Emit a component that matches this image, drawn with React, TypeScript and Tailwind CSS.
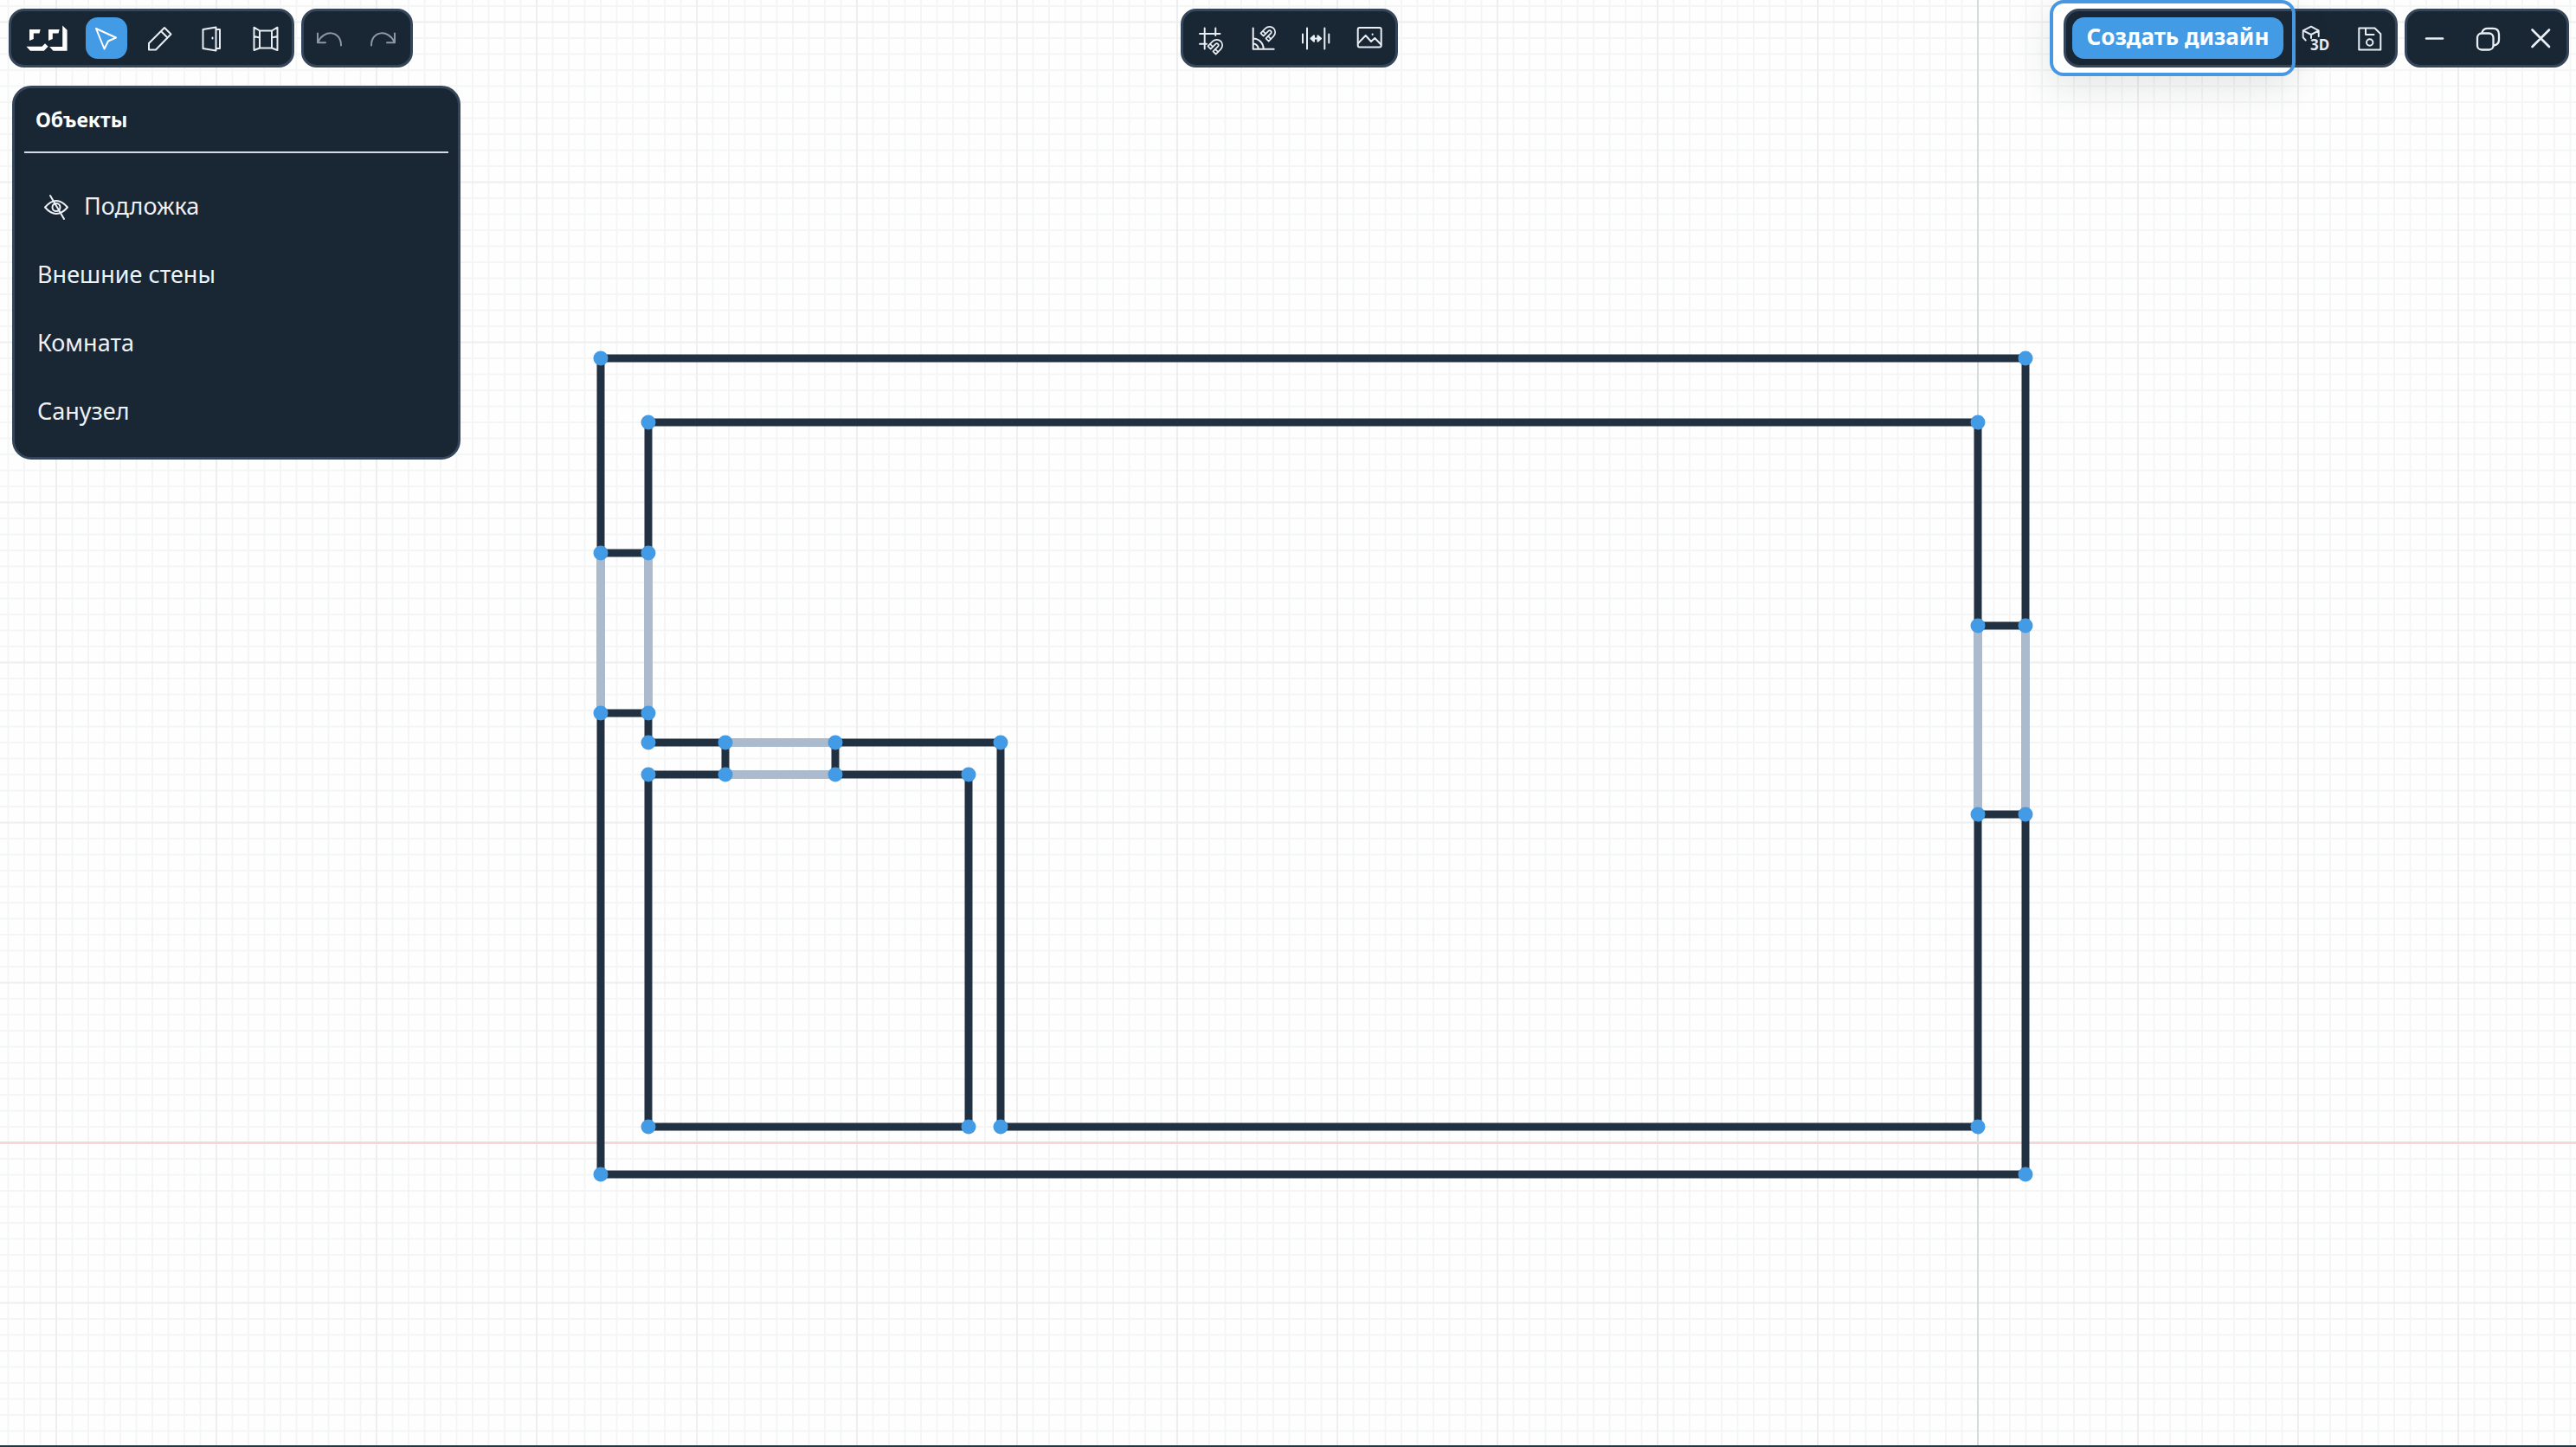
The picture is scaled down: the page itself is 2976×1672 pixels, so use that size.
import type { ReactNode } from "react";

const UNIT = 18.5;
const ORIGIN = { x: 2285, y: 1320.5 };

type Segment = [number, number, number, number];

const walls: Segment[] = [
  [694, 414, 2340, 414],
  [2340, 414, 2340, 723],
  [2340, 941, 2340, 1357],
  [2340, 1357, 694, 1357],
  [694, 1357, 694, 824],
  [694, 639, 694, 414],
  [749, 488, 2285, 488],
  [2285, 488, 2285, 723],
  [2285, 941, 2285, 1302],
  [2285, 1302, 1156, 1302],
  [1156, 1302, 1156, 858],
  [1156, 858, 965, 858],
  [838, 858, 749, 858],
  [749, 858, 749, 824],
  [749, 639, 749, 488],
  [694, 639, 749, 639],
  [694, 824, 749, 824],
  [2285, 723, 2340, 723],
  [2285, 941, 2340, 941],
  [838, 858, 838, 895],
  [965, 858, 965, 895],
  [749, 895, 838, 895],
  [965, 895, 1119, 895],
  [1119, 895, 1119, 1302],
  [1119, 1302, 749, 1302],
  [749, 1302, 749, 895],
];

const openings: Segment[] = [
  [694, 639, 694, 824],
  [749, 639, 749, 824],
  [2285, 723, 2285, 941],
  [2340, 723, 2340, 941],
  [838, 858, 965, 858],
  [838, 895, 965, 895],
];

const nodes = Array.from(
  new Set([...walls, ...openings].flatMap(([a, b, c, d]) => [`${a},${b}`, `${c},${d}`])),
).map((key) => key.split(",").map(Number));

function Lines({ segments }: { segments: Segment[] }) {
  return (
    <>
      {segments.map(([x1, y1, x2, y2], i) => (
        <line key={i} x1={x1} y1={y1} x2={x2} y2={y2} />
      ))}
    </>
  );
}

function FloorPlan() {
  const columns = Array.from({ length: 162 }, (_, i) => i - 123).filter((n) => n !== 0);
  const rows = Array.from({ length: 90 }, (_, i) => i - 71).filter((n) => n !== 0);
  const columnLines = (list: number[]) =>
    list.map((n) => <line key={`c${n}`} x1={ORIGIN.x + n * UNIT} x2={ORIGIN.x + n * UNIT} y1="0" y2="100%" />);
  const rowLines = (list: number[]) =>
    list.map((n) => <line key={`r${n}`} y1={ORIGIN.y + n * UNIT} y2={ORIGIN.y + n * UNIT} x1="0" x2="100%" />);
  const isMajor = (n: number) => n % 10 === 0;
  const isMinor = (n: number) => n % 10 !== 0;

  return (
    <svg className="absolute inset-0 h-full w-full" role="img" aria-label="План помещения">
      <g stroke="#f4f5f5" strokeWidth="2">
        {columnLines(columns.filter(isMinor))}
        {rowLines(rows.filter(isMinor))}
      </g>
      <g stroke="#edeeee" strokeWidth="2">
        {columnLines(columns.filter(isMajor))}
        {rowLines(rows.filter(isMajor))}
      </g>
      <line x1={ORIGIN.x} x2={ORIGIN.x} y1="0" y2="100%" stroke="#d6dcdc" strokeWidth="2" />
      <line y1={ORIGIN.y} y2={ORIGIN.y} x1="0" x2="100%" stroke="#f7d6d7" strokeWidth="3" />
      <g stroke="#223142" strokeWidth="9">
        <Lines segments={walls} />
      </g>
      <g stroke="#abbacd" strokeWidth="10">
        <Lines segments={openings} />
      </g>
      <g fill="#439be6">
        {nodes.map(([x, y]) => (
          <circle key={`${x}-${y}`} cx={x} cy={y} r="8.5" />
        ))}
      </g>
    </svg>
  );
}

function Icon({ children }: { children: ReactNode }) {
  return (
    <svg
      viewBox="0 0 48 48"
      className="size-12"
      fill="none"
      stroke="currentColor"
      strokeWidth="2"
      strokeLinejoin="round"
      strokeLinecap="round"
      aria-hidden="true"
    >
      {children}
    </svg>
  );
}

function Magnet({ x, y, angle }: { x: number; y: number; angle: number }) {
  return (
    <g transform={`translate(${x} ${y}) rotate(${angle})`} strokeWidth="1.7">
      <path d="M-6.5 7V-1A6.5 6.5 0 0 1 6.5-1V7H2V-1A2 2 0 0 0-2-1V7Z" />
      <path d="M-6.5 3.4H-2M2 3.4H6.5" />
    </g>
  );
}

function Tool({ label, active, muted, children }: { label: string; active?: boolean; muted?: boolean; children: ReactNode }) {
  const tone = active ? "bg-[#439be6] text-white" : muted ? "text-[#8d98a3]" : "text-[#e8eef4]";
  return (
    <button type="button" aria-label={label} className={`size-12 shrink-0 rounded-[14px] ${tone}`}>
      <Icon>{children}</Icon>
    </button>
  );
}

function Panel({ children }: { children: ReactNode }) {
  return (
    <div className="flex items-center gap-[13px] rounded-[18px] border-3 border-[#35465a] bg-[#192633] p-[7px]">
      {children}
    </div>
  );
}

function Logo() {
  return (
    <div className="flex w-[66px] justify-end pr-2">
      <svg viewBox="30 28 48 32" className="h-8 w-12" fill="#fff" role="img" aria-label="Логотип">
        <path d="M34 34H46.7L45.5 38.4H38.8V45L34 47Z" />
        <path d="M56 34H68.7L67.5 38.4H60.8V45L56 47Z" />
        <path d="M30.5 53.7H48.5L52 50.2L55.6 53.8L50.8 58.8H35Z" />
        <path d="M72.2 29.5L77.6 34.7V58.8H61.5L57.2 54H72.2Z" />
      </svg>
    </div>
  );
}

const objects = ["Внешние стены", "Комната", "Санузел"];

export default function App() {
  return (
    <main className="relative isolate min-h-screen overflow-hidden border-b-2 border-[#223644] bg-[#fefefe] font-['Noto_Sans','Open_Sans',sans-serif]">
      <FloorPlan />

      <header className="relative grid grid-cols-[1fr_auto_1fr] py-2.5 pl-2.5 pr-2">
        <div className="flex gap-2">
          <Panel>
            <Logo />
            <Tool label="Выбор" active>
              <path d="M12 13L35 23.5L26 27.5L21.5 36.5Z" />
            </Tool>
            <Tool label="Карандаш">
              <path d="M12 37.5V30L30 12L37.5 19.5L20 37.5ZM26 16L33.5 23.5" />
            </Tool>
            <Tool label="Дверь">
              <path d="M13.5 14L28.5 11.5V38.5L13.5 36ZM28.5 14H33V36H28.5" />
              <path d="M24.5 23.5V24.5" />
            </Tool>
            <Tool label="Окно">
              <path d="M18 15.5H32V35.5H18ZM11.5 11.7L18 15.5V35.5L11.5 38ZM38.5 11.7L32 15.5V35.5L38.5 38ZM11.5 22L18 23.5M38.5 22L32 23.5" />
            </Tool>
          </Panel>
          <Panel>
            <Tool label="Отменить" muted>
              <path d="M36 32.5C36 15 16 13.5 9 29M9 18.5V29.3H18" />
            </Tool>
            <Tool label="Повторить" muted>
              <path d="M10 32.5C10 15 30 13.5 37 29M37 18.5V29.3H28" />
            </Tool>
          </Panel>
        </div>

        <Panel>
          <Tool label="Привязка к сетке">
            <path d="M12 19H35.5M12 30.7H20M17.7 12.5V36.5M30.3 12.5V21" />
            <Magnet x={31} y={33} angle={45} />
          </Tool>
          <Tool label="Привязка к углу">
            <path d="M12.7 12.5V36.7H36.7M12.7 24.5A12 12 0 0 1 24.7 36.5M12.7 30.5A6 6 0 0 1 18.7 36.5" />
            <Magnet x={31} y={18} angle={45} />
          </Tool>
          <Tool label="Размеры">
            <path d="M9 19.5V29.5M14 12.5V36.5M34.3 12.5V36.5M39.3 19.5V29.5M20 24.5H29" />
            <path d="M18.5 24.5L22 21.3V27.7ZM30 24.5L26.5 21.3V27.7Z" fill="currentColor" />
          </Tool>
          <Tool label="Изображение">
            <rect x="11.7" y="12" width="27" height="22.5" rx="2" />
            <path d="M12 30L20.7 21L27 28L31.3 24L38.5 31.5M28.6 19.5V20" />
          </Tool>
        </Panel>

        <div className="flex justify-end gap-2">
          <div className="relative isolate">
            <div className="absolute -left-4 -top-2.5 -z-10 h-[88px] w-[284px] rounded-2xl bg-white" />
            <Panel>
              <button
                type="button"
                className="flex h-12 w-[244px] items-center justify-center rounded-[14px] bg-[#439be6] pb-1 text-[26px] font-bold text-white"
              >
                Создать дизайн
              </button>
              <Tool label="Трёхмерный вид">
                <path d="M19 10.7L27.7 15.3V22M19 10.7L9.7 15.3V23.3L12.7 26.5M9.7 15.3L19 20L27.7 15.3M19 20V24" />
                <text x="18" y="38" fill="currentColor" stroke="none" className="text-[17px] font-bold">
                  3D
                </text>
              </Tool>
              <Tool label="Сохранить">
                <path d="M13.3 12.5H31.5L38.3 19.3V37.5H13.3ZM21 12.5V20H30.5" />
                <circle cx="25.7" cy="29" r="3.7" />
              </Tool>
            </Panel>
            <div className="pointer-events-none absolute -left-4 -top-2.5 h-[88px] w-[284px] rounded-2xl border-4 border-[#4797e3] shadow-[0_12px_44px_rgba(40,50,60,0.12)]" />
          </div>
          <Panel>
            <Tool label="Свернуть">
              <path d="M15 24.5H34" strokeWidth="2.5" />
            </Tool>
            <Tool label="Развернуть">
              <rect x="13" y="18.5" width="18.5" height="19" rx="5" strokeWidth="2.3" />
              <path d="M18.5 17.5Q19.5 12.8 25 12.8H31Q38 12.8 38 19.8V26Q38 31.5 32 32.5" strokeWidth="2.3" />
            </Tool>
            <Tool label="Закрыть">
              <path d="M15.5 14.5L35 34M35 14.5L15.5 34" strokeWidth="2.7" />
            </Tool>
          </Panel>
        </div>
      </header>

      <aside className="relative ml-3.5 mt-[11px] w-[518px] rounded-[22px] border-3 border-[#35465a] bg-[#192633] px-[11px] pb-[13px] text-[27px] text-[#eef2f6]">
        <h2 className="border-b-2 border-[#d3dbe8] px-[13px] pb-[21px] pt-5 text-[23px] leading-8 font-bold text-white">Объекты</h2>
        <ul className="mt-[22px]">
          <li className="flex h-[79px] items-center gap-2 pl-[13px]">
            <button type="button" aria-label="Показать подложку" className="size-12">
              <Icon>
                <path d="M11 24.5Q24 9.5 37 24.5Q24 39.5 11 24.5Z" />
                <circle cx="24" cy="24.5" r="4.5" />
                <path d="M17 11L33 38" />
              </Icon>
            </button>
            Подложка
          </li>
          {objects.map((name) => (
            <li key={name} className="flex h-[79px] items-center pl-[15px]">
              {name}
            </li>
          ))}
        </ul>
      </aside>
    </main>
  );
}
